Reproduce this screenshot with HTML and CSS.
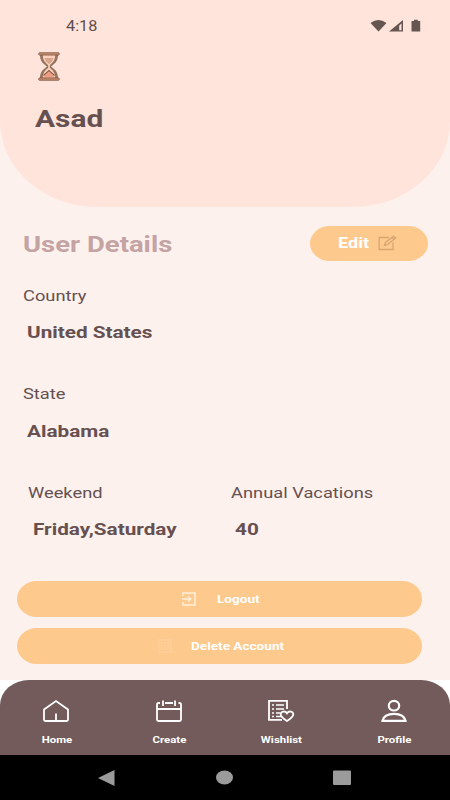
FILE: index.html
```html
<!DOCTYPE html>
<html lang="en">
<head>
<meta charset="utf-8">
<title>Profile</title>
<link rel="stylesheet" href="styles.css">
</head>
<body>
<div class="app">
  <header class="header">
    <div class="status">
      <span class="t time">4:18</span>
      <svg class="status-icons" width="52" height="14" viewBox="0 0 52 14">
        <path d="M.5 4Q8.500-2 16.500 4L8.500 12.500Z"/>
        <path d="M19 12.500 33 1V12.500Z"/>
        <path class="signal-gap" d="M29.200 6.600 31.500 4.400V11.300H29.200Z"/>
        <path d="M41.500 2H44V.8H47.800V2H50.200V12.500H41.500Z"/>
      </svg>
    </div>
    <svg class="hourglass" width="22" height="29" viewBox="0 0 22 29">
      <path class="glass-frame" d="M2 3H20C20 9 17.500 11 13 14.500C17.500 18 20 20 20 26H2C2 20 4.500 18 9 14.500C4.500 11 2 9 2 3Z"/>
      <path class="glass" d="M4.800 3H17.200C17.200 8.500 14.500 10.800 11.800 13.200V15.800C14.500 18.200 17.200 20.500 17.200 26H4.800C4.800 20.500 7.500 18.200 10.200 15.800V13.200C7.500 10.800 4.800 8.500 4.800 3Z"/>
      <path class="sand" d="M6.500 6H15.500L14 9.500 11 12 8 9.500Z"/>
      <path class="sand-pile" d="M5 25.500 11 19.500 17 25.500Z"/>
      <path class="sand-edge" d="M5.500 23.500 11 18.500 16.500 23.500"/>
      <rect class="cap" x=".7" y=".7" width="20.600" height="2.400" rx="1"/>
      <rect class="cap" x=".7" y="25.900" width="20.600" height="2.400" rx="1"/>
    </svg>
    <h1 class="t name">Asad</h1>
  </header>

  <main class="details">
    <div class="title-row">
      <h2 class="t title">User Details</h2>
      <button class="pill edit">
        <span class="t edit-text">Edit</span>
        <svg class="edit-icon" width="19" height="16" viewBox="0 0 19 16">
          <path d="M11 2.500H1.200V14.500H15V7.500"/>
          <path d="M6.500 10.500 7.500 7.500 15.500 1.200 17.800 2.700 9.800 9.500ZM14 2.500 16.300 4.200"/>
        </svg>
      </button>
    </div>
    <div class="field">
      <div class="t label">Country</div>
      <div class="t value">United States</div>
    </div>
    <div class="field">
      <div class="t label">State</div>
      <div class="t value">Alabama</div>
    </div>
    <div class="columns">
      <div class="field">
        <div class="t label">Weekend</div>
        <div class="t value">Friday,Saturday</div>
      </div>
      <div class="field">
        <div class="t label">Annual Vacations</div>
        <div class="t value">40</div>
      </div>
    </div>
    <div class="actions">
      <button class="pill action logout">
        <svg width="14" height="14" viewBox="0 0 14 14">
          <path d="M1 4V1H13V13H1V10M0 7H8.500M6 4.300 8.700 7 6 9.700"/>
        </svg>
        <span class="t">Logout</span>
      </button>
      <button class="pill action delete">
        <svg width="14" height="14" viewBox="0 0 14 14">
          <path d="M1 1H13V13H1ZM1 4H13M4 6V11M7 6V11M10 6V11"/>
        </svg>
        <span class="t">Delete Account</span>
      </button>
    </div>
  </main>

  <nav class="tabs">
    <a class="tab">
      <svg width="28" height="24" viewBox="0 0 28 24">
        <path d="M2 10.500 14 2 26 10.500V20.500Q26 22 24.200 22H3.800Q2 22 2 20.500ZM14 22V14.500"/>
      </svg>
      <span class="t">Home</span>
    </a>
    <a class="tab">
      <svg width="28" height="24" viewBox="0 0 28 24">
        <path d="M5 4H3.500Q2 4 2 5.500V20.500Q2 22 3.500 22H24.500Q26 22 26 20.500V5.500Q26 4 24.500 4H23.500M10 4H18M2 10H26M8 1.500V7M20 1.500V7"/>
      </svg>
      <span class="t">Create</span>
    </a>
    <a class="tab">
      <svg width="28" height="24" viewBox="0 0 28 24">
        <path d="M20 10V1.800H2V20.800H15"/>
        <path class="thin" d="M5 6H7M9 6H17M5 10H7M9 10H17M5 14H7M9 14H13M5 17.500H7M9 17.500H14"/>
        <path d="M20 22C16 19.500 13.700 17.500 13.700 15.300C13.700 12.300 18 11.300 20 14.300C22 11.300 26.300 12.300 26.300 15.300C26.300 17.500 24 19.500 20 22Z"/>
      </svg>
      <span class="t">Wishlist</span>
    </a>
    <a class="tab">
      <svg class="person" width="28" height="24" viewBox="0 0 28 24">
        <ellipse cx="14" cy="6.700" rx="5.200" ry="4.800"/>
        <path d="M2.500 21.800C3.500 17 8.500 14.800 14 14.800S24.500 17 25.500 21.800Z"/>
      </svg>
      <span class="t">Profile</span>
    </a>
  </nav>

  <footer class="system">
    <svg width="17" height="16" viewBox="0 0 17 16"><path d="M0 8 16.500 0V16Z"/></svg>
    <svg width="17" height="16" viewBox="0 0 17 16"><ellipse cx="8.500" cy="7.500" rx="8.500" ry="7"/></svg>
    <svg width="18" height="16" viewBox="0 0 18 16"><rect y=".5" width="18" height="14.500" rx="1"/></svg>
  </footer>
</div>
</body>
</html>
```
FILE: styles.css
```css
* { box-sizing: border-box; }
body {
  margin: 0;
  background: #fff;
  color: #665050;
  font-family: Roboto, "Liberation Sans", sans-serif;
}
.app {
  width: 450px;
  height: 800px;
  display: flex;
  flex-direction: column;
  background: linear-gradient(#fdf1ed 0 680px, #fff 680px);
  overflow: hidden;
}
svg { display: block; flex: none; }

/* Wide lettering used across the whole interface */
.t {
  display: block;
  width: max-content;
  margin: 0;
  white-space: nowrap;
  transform: scaleX(1.18);
  transform-origin: left center;
}

.header {
  flex: none;
  height: 207px;
  padding-top: 16px;
  background: #ffe4db;
  border-radius: 0 0 97px 97px / 0 0 86px 86px;
}
.status {
  display: flex;
  justify-content: space-between;
  align-items: center;
  height: 20px;
  padding: 0 28px 0 66px;
}
.time { font-size: 13.800px; line-height: 20px; color: #5d4c49; }
.status-icons { fill: #665651; }
.signal-gap { fill: #ffe4db; }
.hourglass { margin: 16px 0 0 38px; }
.glass-frame { fill: #96745f; }
.glass { fill: #fbd2bd; }
.sand { fill: #d9a58b; }
.sand-pile { fill: #ef9d80; }
.sand-edge { fill: none; stroke: #8e5741; stroke-width: 1.2; }
.cap { fill: #c28a6b; stroke: #875b47; stroke-width: .8; }
.name {
  margin: 23px 0 0 35.300px;
  font-size: 24.800px;
  line-height: 30px;
  transform: scaleX(1.205);
}

.details { flex: none; height: 473px; }
.title-row {
  display: flex;
  justify-content: space-between;
  align-items: center;
  height: 54px;
  padding: 18.500px 22.500px 0 22.500px;
}
.title {
  padding-top: 2px;
  font-size: 22.800px;
  line-height: 31px;
  color: #c3a3a3;
  transform: scaleX(1.205);
}
.pill {
  display: flex;
  align-items: center;
  border: 0;
  padding: 0;
  height: 35.500px;
  border-radius: 20px / 17.700px;
  background: #fec98d;
  color: #fff;
  font-family: inherit;
  font-weight: 700;
}
.edit { width: 118px; padding-left: 28.500px; }
.edit-text {
  width: 40px;
  padding-top: 1px;
  font-size: 14.800px;
  line-height: 21px;
  text-align: left;
  transform: scaleX(1.22);
}
.edit-icon { fill: none; stroke: #d8a672; stroke-width: 1.3; }

.field { padding: 0 0 0 22.500px; height: 98.500px; }
.title-row + .field { margin-top: 24.500px; }
.label { font-size: 15.500px; line-height: 20px; }
.value {
  margin: 15.500px 0 0 4.900px;
  font-size: 17.200px;
  line-height: 22px;
  font-weight: 700;
  transform: scaleX(1.205);
}
.columns { display: grid; grid-template-columns: 202.500px 1fr; padding-left: 5.500px; }

.actions { display: grid; gap: 11.500px; padding: 0 28px 0 17px; }
.action { width: 405px; font-size: 11.500px; }
.action svg { fill: none; stroke: #fff0d9; stroke-width: 1.5; }
.action .t { padding-top: 1px; }
.logout { padding-left: 165px; gap: 20.500px; }
.delete { padding-left: 141px; gap: 19.200px; }
.delete svg { stroke: #ffd09b; }

.tabs {
  flex: none;
  display: grid;
  grid-template-columns: repeat(4, 1fr);
  height: 75px;
  background: #725b5a;
  border-radius: 29px 29px 0 0 / 25px 25px 0 0;
}
.tab {
  display: flex;
  flex-direction: column;
  align-items: center;
  padding-top: 19px;
  color: #fff;
  font-size: 9.700px;
  font-weight: 700;
}
.tab svg { fill: none; stroke: #fff; stroke-width: 1.8; }
.tab .thin { stroke-width: 1.4; }
.tab .person { stroke-width: 2.2; }
.tab .t { margin: 10px 0 0 1px; line-height: 14px; transform-origin: center; }

.system {
  flex: none;
  display: flex;
  align-items: center;
  justify-content: space-between;
  height: 45px;
  padding: 0 99px 0 98px;
  background: #000;
}
.system svg { fill: #9b9b9b; }
```
